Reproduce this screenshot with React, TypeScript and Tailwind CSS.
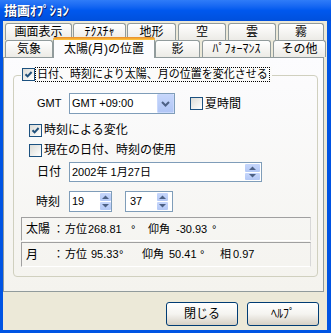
import React from "react";

const row1 = [
  { label: "画面表示", cls: "w-[67px]" },
  { label: "ﾃｸｽﾁｬ", cls: "ml-[1px] w-[53px]" },
  { label: "地形", cls: "ml-[1px] w-[49px]" },
  { label: "空", cls: "ml-[2px] w-[48px]" },
  { label: "雲", cls: "ml-[2px] w-[48px]" },
  { label: "霧", cls: "ml-[2px] w-[46px]" },
];

const tabBase =
  "flex items-center justify-center rounded-t-[3px] border border-b-0 border-[#919b9c] bg-gradient-to-b from-white to-[#ecebe6] text-[12px] text-black";

const infoBox =
  "ml-[7px] flex w-[290px] items-center whitespace-nowrap border border-b-white border-l-[#a0a0a0] border-r-[#d8d8d8] border-t-[#a0a0a0] pl-[4px] text-[11px] [&>span]:shrink-0";

function Check({ checked }: { checked?: boolean }) {
  return (
    <span className="flex h-[13px] w-[13px] shrink-0 items-center justify-center border border-[#1c5180] bg-gradient-to-br from-[#dcdcd7] to-white">
      {checked && (
        <svg width="9" height="9" viewBox="0 0 9 9">
          <path d="M1.5 4.2 L3.6 6.4 L7.6 2" stroke="#21507a" strokeWidth="2" fill="none" />
        </svg>
      )}
    </span>
  );
}

function Arrow({ up }: { up?: boolean }) {
  return (
    <svg width="7" height="4" viewBox="0 0 7 4">
      <path d={up ? "M0 4 L3.5 0.5 L7 4 Z" : "M0 0 L3.5 3.5 L7 0 Z"} fill="#4d6185" />
    </svg>
  );
}

function Spin({ w }: { w: string }) {
  return (
    <span className={`flex h-full flex-col gap-[1px] py-[1px] ${w}`}>
      <span className="flex flex-1 items-center justify-center rounded-[1px] bg-gradient-to-b from-[#c6d6fb] to-[#b3c8f6]">
        <Arrow up />
      </span>
      <span className="flex flex-1 items-center justify-center rounded-[1px] bg-gradient-to-b from-[#c6d6fb] to-[#b3c8f6]">
        <Arrow />
      </span>
    </span>
  );
}

function XpButton({ label }: { label: string }) {
  return (
    <div className="flex h-[24px] w-[72px] items-center justify-center rounded-[3px] border border-[#003c74] bg-gradient-to-b from-white via-[#f5f4f0] to-[#d6d0c5] text-[12px] text-black">
      {label}
    </div>
  );
}

export default function App() {
  return (
    <div className="flex h-[333px] w-[331px] flex-col overflow-hidden bg-[#0054e3] font-['Liberation_Sans','Noto_Sans_CJK_JP',sans-serif] text-[11px] text-black">
      {/* title bar */}
      <div className="flex h-[21px] items-center bg-gradient-to-b from-[#2f7cf8] via-[#0058ee] to-[#0050dc] pl-[4px] text-[13px] font-bold text-white [text-shadow:1px_1px_0_#0a246a]">
        描画ｵﾌﾟｼｮﾝ
      </div>

      <div className="mb-[3px] ml-[3px] mr-[4px] flex flex-1 flex-col bg-[#ece9d8]">
        {/* tabs */}
        <div className="mt-[2px] flex h-[17px] pl-[2px]">
          {row1.map((t) => (
            <div key={t.label} className={`${tabBase} ${t.cls} h-[17px]`}>
              {t.label}
            </div>
          ))}
        </div>
        <div className="flex h-[17px] items-end pl-[2px]">
          <div className={`${tabBase} h-[17px] w-[48px]`}>気象</div>
          <div className="relative z-10 -mb-[1px] flex h-[21px] w-[102px] flex-col rounded-t-[3px] border border-b-0 border-[#919b9c] bg-[#fcfcfe]">
            <span className="-mx-[1px] -mt-[1px] h-[3px] rounded-t-[3px] bg-gradient-to-b from-[#e68b2c] to-[#ffc73c]" />
            <span className="flex flex-1 items-center justify-center text-[12px]">太陽(月)の位置</span>
          </div>
          <div className={`${tabBase} h-[17px] w-[45px]`}>影</div>
          <div className={`${tabBase} ml-[2px] h-[17px] w-[69px]`}>ﾊﾟﾌｫｰﾏﾝｽ</div>
          <div className={`${tabBase} ml-[2px] h-[17px] w-[53px]`}>その他</div>
        </div>

        {/* panel */}
        <div className="h-[235px] w-[321px] border border-[#919b9c] bg-gradient-to-b from-[#fcfcfe] to-[#f4f3ee]">
          <div className="ml-[9px] mt-[17px] flex h-[202px] w-[305px] flex-col rounded-[4px] border border-[#d0d0bf]">
            {/* group header */}
            <div className="-mt-[9px] ml-[7px] flex h-[15px] items-center self-start bg-[#fbfbfa] pl-[1px] pr-[2px]">
              <Check checked />
              <span className="flex h-[15px] items-center border border-dotted border-black px-[1px]">
                日付、時刻により太陽、月の位置を変化させる
              </span>
            </div>

            {/* GMT */}
            <div className="mt-[11px] flex h-[21px] items-center pl-[23px]">
              <span className="w-[32px]">GMT</span>
              <div className="flex h-[21px] w-[106px] items-center border border-[#7f9db9] bg-white">
                <span className="flex-1 pl-[2px]">GMT +09:00</span>
                <span className="flex h-[19px] w-[17px] items-center justify-center rounded-[1px] border border-[#c9d8fc] bg-gradient-to-b from-[#c6d6fb] to-[#b1c6f6]">
                  <svg width="9" height="6" viewBox="0 0 9 6">
                    <path d="M1 1 L4.5 4.5 L8 1" stroke="#4d6185" strokeWidth="2" fill="none" />
                  </svg>
                </span>
              </div>
              <span className="ml-[15px] flex items-center gap-[2px]">
                <Check />
                <span className="text-[12px]">夏時間</span>
              </span>
            </div>

            <div className="mt-[9px] flex h-[14px] items-center gap-[2px] pl-[15px]">
              <Check checked />
              <span className="text-[12px]">時刻による変化</span>
            </div>
            <div className="mt-[6px] flex h-[14px] items-center gap-[2px] pl-[15px]">
              <Check />
              <span className="text-[12px]">現在の日付、時刻の使用</span>
            </div>

            {/* date */}
            <div className="mt-[5px] flex h-[20px] items-center pl-[23px]">
              <span className="w-[32px] text-[12px]">日付</span>
              <div className="flex h-[20px] w-[193px] items-center border border-[#7f9db9] bg-white pr-[1px]">
                <span className="flex-1 pl-[2px]">2002年 1月27日</span>
                <Spin w="w-[15px]" />
              </div>
            </div>

            {/* time */}
            <div className="mt-[9px] flex h-[21px] items-center pl-[22px]">
              <span className="w-[33px] text-[12px]">時刻</span>
              <div className="flex h-[21px] w-[43px] items-center border border-[#7f9db9] bg-white">
                <span className="flex-1 pl-[2px]">19</span>
                <Spin w="w-[11px]" />
              </div>
              <div className="ml-[13px] flex h-[21px] w-[48px] items-center border border-[#7f9db9] bg-white pr-[4px]">
                <span className="flex-1 pl-[4px]">37</span>
                <Spin w="w-[11px]" />
              </div>
            </div>

            {/* info */}
            <div className={`${infoBox} mt-[5px] h-[24px]`}>
              <span className="w-[27px] text-[12px]">太陽</span>
              <span className="w-[12px]">：</span>
              <span className="w-[23px]">方位</span>
              <span className="w-[43px]">268.81</span>
              <span className="w-[17px]">°</span>
              <span className="w-[28px]">仰角</span>
              <span className="w-[36px]">-30.93</span>
              <span>°</span>
            </div>
            <div className={`${infoBox} mt-[1px] h-[25px]`}>
              <span className="w-[27px] text-[12px]">月</span>
              <span className="w-[12px]">：</span>
              <span className="w-[26px]">方位</span>
              <span className="w-[28px]">95.33</span>
              <span className="w-[23px]">°</span>
              <span className="w-[27px]">仰角</span>
              <span className="w-[31px]">50.41</span>
              <span className="w-[20px]">°</span>
              <span className="w-[13px]">相</span>
              <span>0.97</span>
            </div>
          </div>
        </div>

        {/* buttons */}
        <div className="mt-[10px] flex justify-end gap-[9px] pr-[8px]">
          <XpButton label="閉じる" />
          <XpButton label="ﾍﾙﾌﾟ" />
        </div>
      </div>
    </div>
  );
}
